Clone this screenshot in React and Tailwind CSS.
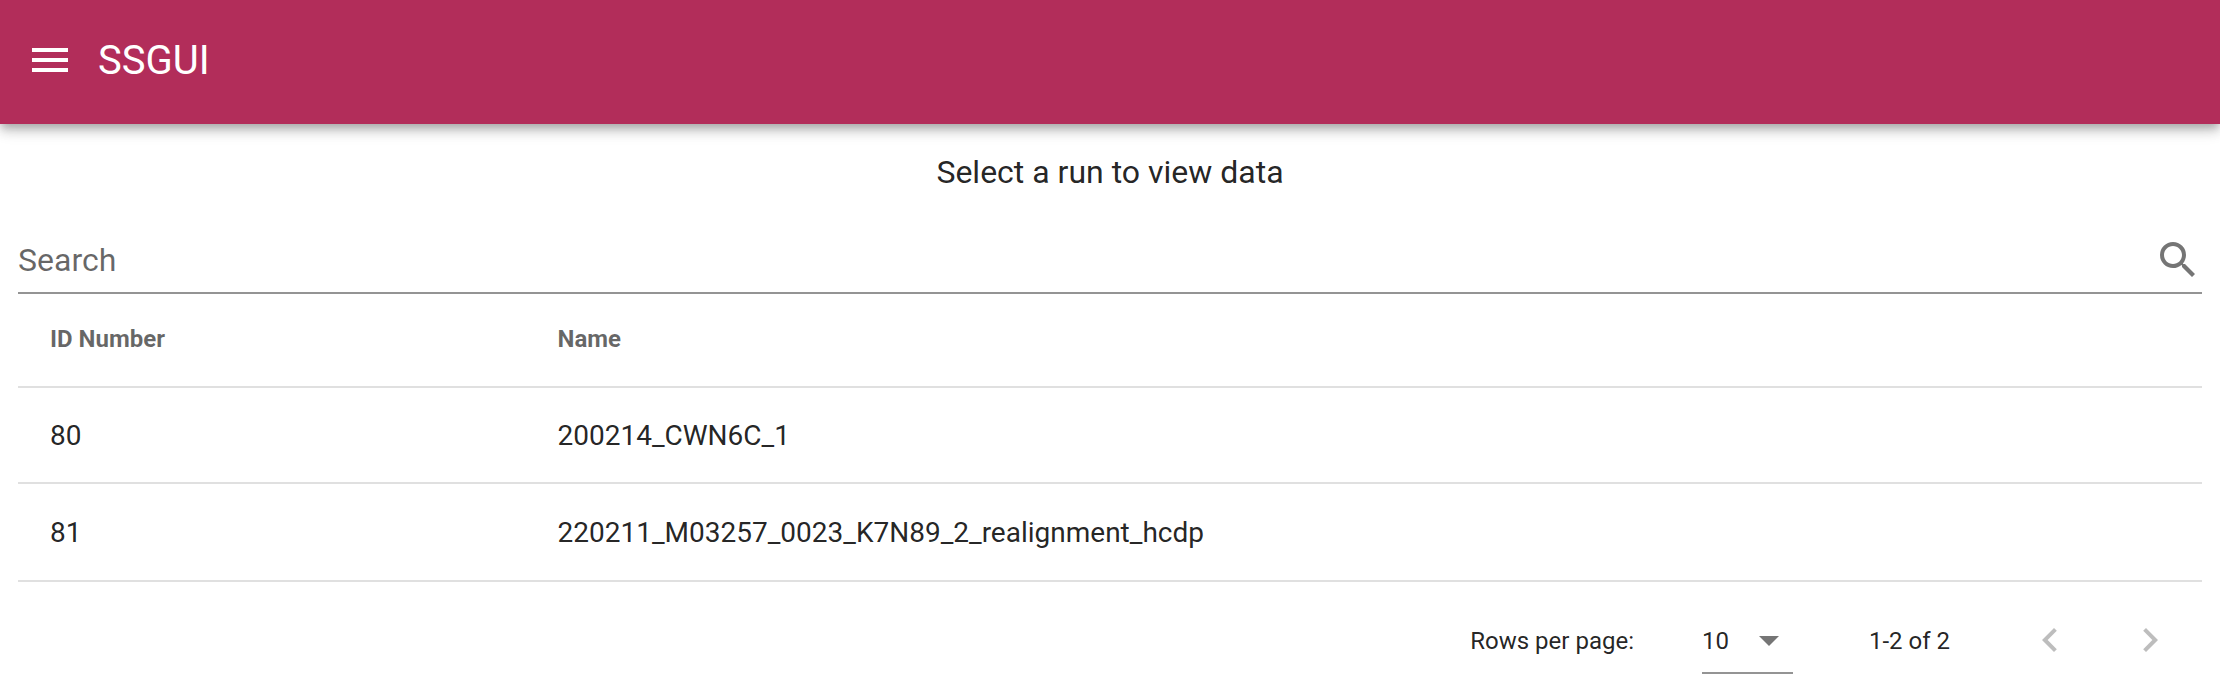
const ICONS = {
  menu: 'M3,6H21V8H3V6M3,11H21V13H3V11M3,16H21V18H3V16Z',
  magnify:
    'M9.5,3A6.5,6.5 0 0,1 16,9.5C16,11.11 15.41,12.59 14.44,13.73L14.71,14H15.5L20.5,19L19,20.5L14,15.5V14.71L13.73,14.44C12.59,15.41 11.11,16 9.5,16A6.5,6.5 0 0,1 3,9.5A6.5,6.5 0 0,1 9.5,3M9.5,5C7,5 5,7 5,9.5C5,12 7,14 9.5,14C12,14 14,12 14,9.5C14,7 12,5 9.5,5Z',
  menuDown: 'M7,10L12,15L17,10H7Z',
  chevronLeft: 'M15.41,16.58L10.83,12L15.41,7.41L14,6L8,12L14,18L15.41,16.58Z',
  chevronRight: 'M8.59,16.58L13.17,12L8.59,7.41L10,6L16,12L10,18L8.59,16.58Z',
};

const RUNS = [
  { id: 80, name: '200214_CWN6C_1' },
  { id: 81, name: '220211_M03257_0023_K7N89_2_realignment_hcdp' },
];

function Icon({ name, className = '' }) {
  return (
    <svg viewBox="0 0 24 24" className={`size-12 shrink-0 fill-current ${className}`} aria-hidden="true">
      <path d={ICONS[name]} />
    </svg>
  );
}

function AppBar() {
  return (
    <header className="flex h-[124px] items-center bg-[#b22d5a] pb-1 pl-[26px] text-white shadow-[0_4px_8px_-2px_rgba(0,0,0,0.2),0_8px_10px_0_rgba(0,0,0,0.14),0_2px_20px_0_rgba(0,0,0,0.12)]">
      <button aria-label="Menu">
        <Icon name="menu" />
      </button>
      <h1 className="ml-6 pt-0.5 text-[40px] leading-[60px]">SSGUI</h1>
    </header>
  );
}

function RunsTable() {
  return (
    <div>
      <div className="grid h-[94px] grid-cols-[507.5px_1fr] items-center border-b-2 border-black/12 pb-0.5 text-2xl font-bold text-black/60">
        <div className="px-8">ID Number</div>
        <div className="px-8">Name</div>
      </div>
      {RUNS.map((run) => (
        <div
          key={run.id}
          className="grid h-24 grid-cols-[507.5px_1fr] items-center border-b-2 border-black/12 pt-0.5 text-[28px] last:h-[98px]"
        >
          <div className="px-8">{run.id}</div>
          <div className="px-8">{run.name}</div>
        </div>
      ))}
    </div>
  );
}

function Pagination() {
  return (
    <footer className="flex h-[114px] items-start justify-end pt-[34px] pr-7 text-2xl leading-[48px]">
      <span className="mr-[68px] pt-px">Rows per page:</span>
      <div className="flex h-[58px] w-[91px] justify-between border-b-2 border-black/42">
        <span className="pt-px">10</span>
        <Icon name="menuDown" className="text-black/54" />
      </div>
      <span className="ml-[76px] pt-px">1-2 of 2</span>
      <div className="ml-[76px] flex gap-[52px] text-black/26">
        <button aria-label="Previous page" className="h-12">
          <Icon name="chevronLeft" />
        </button>
        <button aria-label="Next page" className="h-12">
          <Icon name="chevronRight" />
        </button>
      </div>
    </footer>
  );
}

export default function App() {
  return (
    <div className="h-[696px] w-[2220px] overflow-hidden bg-white font-['Roboto',sans-serif] text-black/87">
      <AppBar />
      <main className="px-[18px]">
        <h2 className="pt-6 text-center text-[32px] leading-[48px]">Select a run to view data</h2>
        <div className="mt-[34px] flex h-16 items-center justify-between border-b-2 border-black/42">
          <span className="pb-0.5 text-[32px] leading-[48px] text-black/60">Search</span>
          <Icon name="magnify" className="-mt-0.5 text-black/54" />
        </div>
        <RunsTable />
        <Pagination />
      </main>
    </div>
  );
}
